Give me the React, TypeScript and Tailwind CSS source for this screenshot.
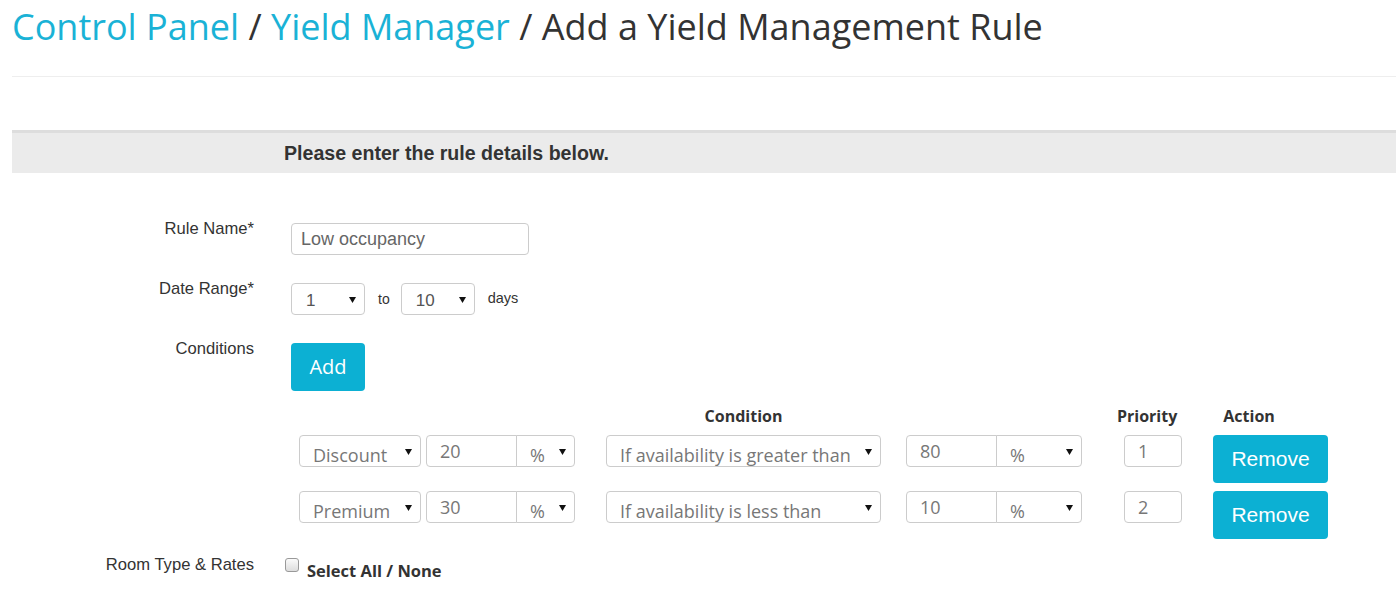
import React from 'react';

const Arrow: React.FC = () => (
  <svg width="7" height="6" viewBox="0 0 7 6" className="shrink-0">
    <path d="M0 0 L7 0 L3.5 6 Z" fill="#111" />
  </svg>
);

const Select: React.FC<{ value: string; className: string; text?: string }> = ({ value, className, text = 'pt-[7px] pl-[13px] text-[18px]' }) => (
  <div className={`flex h-[32px] overflow-hidden border border-[#ccc] bg-white ${className}`}>
    <div className={`flex-1 whitespace-nowrap leading-[24px] ${text}`}>{value}</div>
    <div className="pt-[13px] pr-[8px]">
      <Arrow />
    </div>
  </div>
);

const Field: React.FC<{ value: string; className: string }> = ({ value, className }) => (
  <div className={`h-[32px] border border-[#ccc] bg-white pt-[3px] pl-[13px] text-[18px] leading-[24px] ${className}`}>
    {value}
  </div>
);

const Row: React.FC<{ label: string; children: React.ReactNode; className?: string }> = ({ label, children, className = '' }) => (
  <div className={`flex items-start ${className}`}>
    <div className="w-[242px] shrink-0 pt-[2px] text-right text-[16.6px] leading-[20px] text-[#333] [font-family:'Liberation_Sans',Arial,sans-serif]">
      {label}
    </div>
    <div className="ml-[37px] flex-1">{children}</div>
  </div>
);

const ConditionRow: React.FC<{ type: string; amount: string; cond: string; value: string; priority: string }> = ({ type, amount, cond, value, priority }) => (
  <div className="flex items-start">
    <Select value={type} className="w-[122px] rounded-[4px]" />
    <div className="ml-[5px] flex">
      <Field value={amount} className="w-[91px] rounded-l-[4px]" />
      <Select value="%" className="-ml-px w-[59px] rounded-r-[4px]" />
    </div>
    <Select value={cond} className="ml-[31px] w-[275px] rounded-[4px]" />
    <div className="ml-[25px] flex">
      <Field value={value} className="w-[91px] rounded-l-[4px]" />
      <Select value="%" className="-ml-px w-[86px] rounded-r-[4px]" />
    </div>
    <Field value={priority} className="ml-[42px] w-[58px] rounded-[4px] pl-[9px]" />
    <button className="ml-[31px] h-[48px] w-[115px] rounded-[4px] bg-[#0cb0d3] text-[21px] text-white [font-family:'Liberation_Sans',Arial,sans-serif]">
      Remove
    </button>
  </div>
);

export default function App() {
  return (
    <div className="min-h-screen bg-white pl-[12px] text-[#777] [font-family:'Open_Sans',sans-serif]">
      <h1 className="pt-[7px] text-[36px] leading-[40px] text-[#333]">
        <span className="text-[#1ab2d6]">Control Panel</span> / <span className="text-[#1ab2d6]">Yield Manager</span> / Add a Yield Management Rule
      </h1>
      <div className="mt-[29px] h-px bg-[#eee]" />
      <div className="mt-[53px] h-[43px] border-t-[3px] border-[#ddd] bg-[#ebebeb] pl-[272px] text-[19.6px] leading-[41px] font-bold text-[#333] [font-family:'Liberation_Sans',Arial,sans-serif]">
        Please enter the rule details below.
      </div>

      <Row label="Rule Name*" className="mt-[44px]">
        <div className="mt-[6px] h-[32px] w-[238px] rounded-[4px] border border-[#ccc] pl-[9px] text-[18px] leading-[30px] text-[#666] [font-family:'Liberation_Sans',Arial,sans-serif]">
          Low occupancy
        </div>
      </Row>

      <Row label="Date Range*" className="mt-[22px]">
        <div className="mt-[6px] flex items-center text-[#555] [font-family:'Liberation_Sans',Arial,sans-serif]">
          <Select value="1" className="w-[74px] rounded-[4px]" text="pt-[5px] pl-[14px] text-[17px] text-[#555]" />
          <span className="ml-[13px] text-[14px] text-[#333]">to</span>
          <Select value="10" className="ml-[11px] w-[74px] rounded-[4px]" text="pt-[5px] pl-[14px] text-[17px] text-[#555]" />
          <span className="ml-[13px] text-[14.5px] text-[#333]">days</span>
        </div>
      </Row>

      <Row label="Conditions" className="mt-[22px]">
        <button className="mt-[6px] h-[48px] w-[74px] rounded-[4px] bg-[#0cb0d3] text-[20px] text-white">
          Add
        </button>
      </Row>

      <div className="mt-[14px] ml-[287px] flex flex-col">
        <div className="flex text-[16px] leading-[22px] font-bold text-[#333]">
          <div className="ml-[307px] w-[275px] text-center">Condition</div>
          <div className="ml-[236px]">Priority</div>
          <div className="ml-[46px]">Action</div>
        </div>
        <div className="mt-[8px]">
          <ConditionRow type="Discount" amount="20" cond="If availability is greater than" value="80" priority="1" />
        </div>
        <div className="mt-[8px]">
          <ConditionRow type="Premium" amount="30" cond="If availability is less than" value="10" priority="2" />
        </div>
      </div>

      <Row label="Room Type & Rates" className="mt-[14px]">
        <div className="-ml-[6px] flex items-start">
          <div className="mt-[5px] h-[14px] w-[14px] rounded-[3px] border border-[#999] bg-gradient-to-b from-[#fafafa] to-[#ddd]" />
          <span className="ml-[8px] mt-[7px] text-[16.5px] leading-[22px] font-bold text-[#333]">Select All / None</span>
        </div>
      </Row>
    </div>
  );
}
